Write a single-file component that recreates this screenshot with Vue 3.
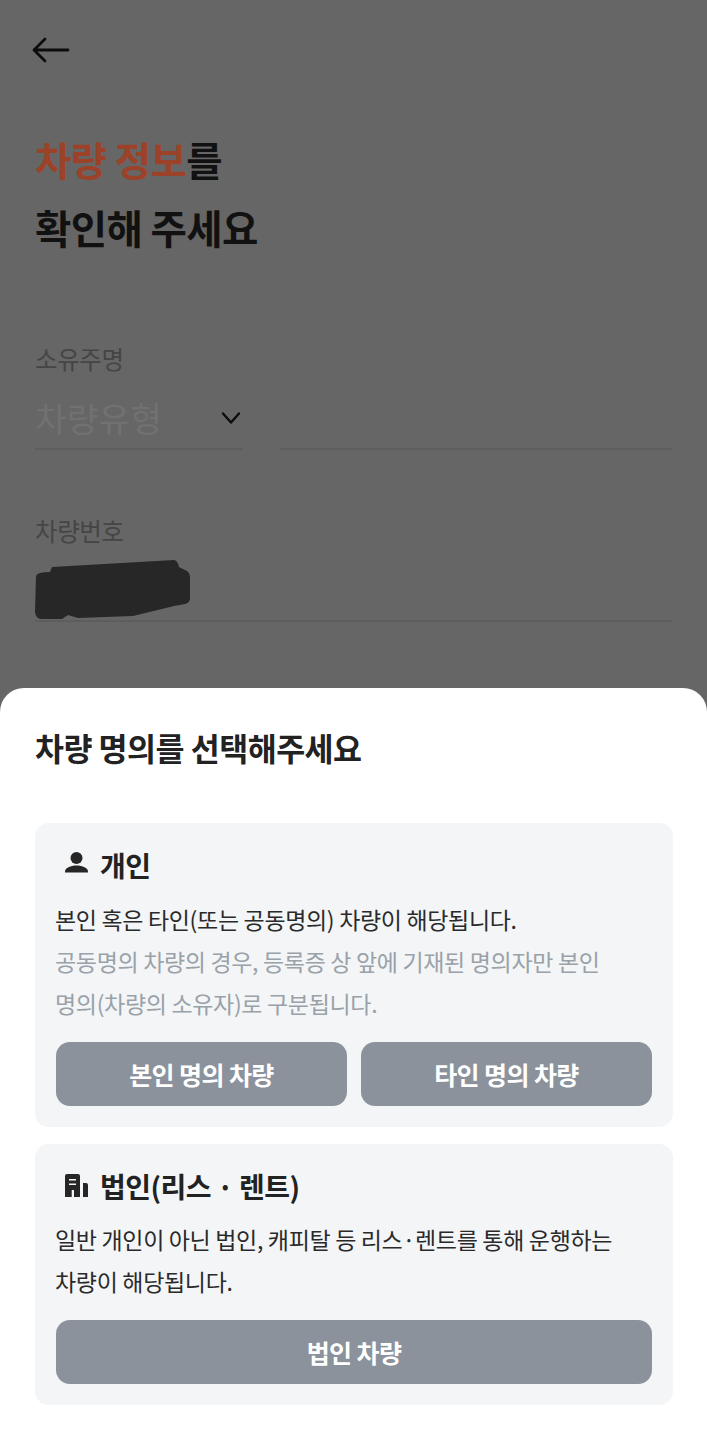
<script setup>
const blob = 'M17 7 L139 0 Q143 1 144 7 L152 11 Q155 13 155 18 L155 38 Q155 43 150 44 L139 46 L98 56 L43 58 L33 55 L27 59 L6 59 Q1 59 0 52 L1 16 Q2 12 15 12 Z'
</script>

<template>
  <div class="page">
    <section class="form">
      <button class="back" aria-label="뒤로">
        <svg width="38" height="26" viewBox="0 0 38 26" fill="none" stroke="#0c0c0c" stroke-width="2.8" stroke-linecap="round" stroke-linejoin="round">
          <path d="M36 13H2M13 2 2 13l11 11" />
        </svg>
      </button>
      <h1 class="headline"><span class="accent">차량 정보</span>를<br />확인해 주세요</h1>

      <div class="field first">
        <label class="label">소유주명</label>
        <div class="owner-row">
          <div class="select">
            <span class="placeholder">차량유형</span>
            <svg class="chevron" width="20" height="14" viewBox="0 0 20 14" fill="none" stroke="#0c0c0c" stroke-width="2.4" stroke-linecap="round" stroke-linejoin="round">
              <path d="M2 2.500 10 11.500 18 2.500" />
            </svg>
          </div>
          <div class="owner-input"></div>
        </div>
      </div>

      <div class="field second">
        <label class="label">차량번호</label>
        <div class="plate">
          <svg class="scribble" width="156" height="60" viewBox="0 0 156 60"><path :d="blob" fill="#272727" /></svg>
        </div>
      </div>
    </section>

    <section class="sheet">
      <h2 class="sheet-title">차량 명의를 선택해주세요</h2>

      <div class="card">
        <div class="card-head">
          <svg width="26" height="26" viewBox="0 0 26 26" fill="#262626">
            <circle cx="13.500" cy="6" r="6" />
            <path d="M2 20.500v-1c0-3.500 5.500-6 11.500-6S25 16 25 19.500v1Z" />
          </svg>
          <span>개인</span>
        </div>
        <p class="body">본인 혹은 타인(또는 공동명의) 차량이 해당됩니다.</p>
        <p class="body muted">공동명의 차량의 경우, 등록증 상 앞에 기재된 명의자만 본인<br />명의(차량의 소유자)로 구분됩니다.</p>
        <div class="actions">
          <button class="action">본인 명의 차량</button>
          <button class="action">타인 명의 차량</button>
        </div>
      </div>

      <div class="card">
        <div class="card-head">
          <svg width="26" height="26" viewBox="0 0 26 26" fill="#262626">
            <path fill-rule="evenodd" d="M2 3a2 2 0 0 1 2-2h11a2 2 0 0 1 2 2v21H2ZM6 6v1.500h7V6Zm0 4.500V12h7v-1.500ZM8.700 17v7H11v-7Z" />
            <path d="M20 10h3a2 2 0 0 1 2 2v12h-5Z" />
          </svg>
          <span>법인(리스 · 렌트)</span>
        </div>
        <p class="body corp">일반 개인이 아닌 법인, 캐피탈 등 리스·렌트를 통해 운행하는<br />차량이 해당됩니다.</p>
        <div class="actions">
          <button class="action">법인 차량</button>
        </div>
      </div>
    </section>
  </div>
</template>

<style>
html, body { margin: 0; padding: 0; }
</style>

<style scoped>
.page {
  width: 707px;
  height: 1440px;
  overflow: hidden;
  display: flex;
  flex-direction: column;
  background: #666;
  font-family: "Noto Sans CJK KR", "Noto Sans", sans-serif;
}
.form {
  height: 688px;
  flex: none;
  padding: 37px 35px 0;
  box-sizing: border-box;
}
.back {
  display: block;
  padding: 0;
  margin: 0 0 0 -3px;
  border: 0;
  background: none;
  height: 26px;
}
.headline {
  margin: 62px 0 0;
  font-size: 39.500px;
  line-height: 68px;
  font-weight: 700;
  letter-spacing: -0.6px;
  color: #111;
}
.accent { color: #9c4229; }
.field { display: flex; flex-direction: column; }
.first { margin-top: 80px; }
.second { margin-top: 63px; }
.label {
  font-size: 24.500px;
  line-height: 36px;
  letter-spacing: -0.4px;
  color: #454545;
}
.owner-row {
  display: flex;
  gap: 37px;
  margin-top: 5px;
}
.select {
  width: 208px;
  height: 68px;
  box-sizing: border-box;
  display: flex;
  align-items: center;
  justify-content: space-between;
  padding: 4px 2px 0 0;
  border-bottom: 2px solid #5b5d5f;
}
.chevron { margin-top: 2px; }
.placeholder {
  font-size: 34.500px;
  line-height: 46px;
  color: #717171;
}
.owner-input {
  flex: 1;
  height: 68px;
  box-sizing: border-box;
  border-bottom: 2px solid #5b5d5f;
}
.plate {
  height: 78px;
  box-sizing: border-box;
  border-bottom: 2px solid #5b5d5f;
  margin-top: -5px;
  padding-top: 16px;
}
.scribble { display: block; }
.sheet {
  flex: 1;
  background: #fff;
  border-radius: 24px 24px 0 0;
  padding: 37px 34px 0 35px;
}
.sheet-title {
  margin: 0 0 54px;
  font-size: 31.500px;
  line-height: 44px;
  font-weight: 700;
  letter-spacing: -0.5px;
  color: #222;
}
.card {
  background: #f3f5f7;
  border-radius: 14px;
  padding: 21px;
  margin-bottom: 17px;
}
.card-head {
  display: flex;
  align-items: center;
  gap: 11px;
  height: 42px;
  padding-left: 7px;
  margin-bottom: 12px;
  font-size: 28px;
  font-weight: 700;
  letter-spacing: -0.5px;
  color: #222;
}
.body {
  margin: 0 0 0 -1px;
  font-size: 23px;
  line-height: 42px;
  letter-spacing: -0.33px;
  color: #2a2a2a;
}
.corp { margin-top: -1px; }
.muted { color: #99a1a9; }
.actions {
  display: flex;
  gap: 14px;
  margin-top: 18px;
}
.action {
  flex: 1;
  height: 64px;
  border: 0;
  border-radius: 14px;
  background: #8b929c;
  color: #fff;
  font-family: inherit;
  font-size: 25px;
  font-weight: 700;
  letter-spacing: -0.6px;
}
</style>
